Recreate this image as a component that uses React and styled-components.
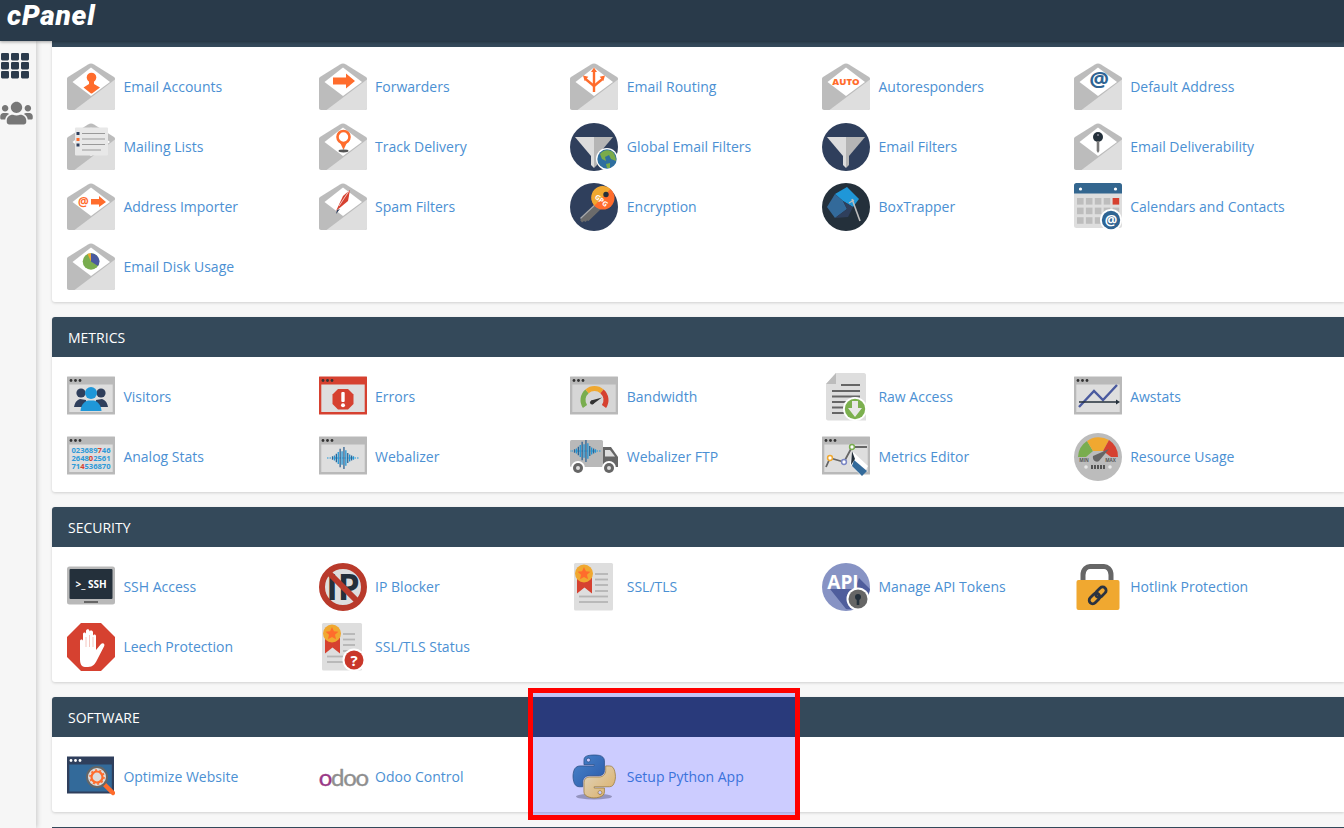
import React from 'react'
import styled, { createGlobalStyle } from 'styled-components'
import { FaUsers } from 'react-icons/fa'

const GlobalStyle = createGlobalStyle`
  html, body {
    margin: 0;
    padding: 0;
    height: 100%;
    overflow: hidden;
    background: #f7f7f7;
    font-family: "Open Sans", "Liberation Sans", sans-serif;
  }
`

const Page = styled.div`
  position: relative;
  width: 1344px;
  height: 828px;
  overflow: hidden;
  display: flex;
  flex-direction: column;
`

const TopBar = styled.header`
  flex: 0 0 41px;
  background: #293a4a;
  box-shadow: 0 1px 3px rgba(0, 0, 0, 0.35);
  position: relative;
  z-index: 2;
  padding-left: 7px;
`

const Logo = styled.div`
  color: #fff;
  font-family: Roboto, "Open Sans", sans-serif;
  font-style: italic;
  font-weight: 900;
  font-size: 28px;
  line-height: 32px;
  letter-spacing: 0.8px;
`

const Layout = styled.div`
  flex: 1;
  display: flex;
  min-height: 0;
`

const Sidebar = styled.aside`
  flex: 0 0 36px;
  background: #f6f6f6;
  box-shadow: 1px 0 5px rgba(0, 0, 0, 0.2);
  display: flex;
  flex-direction: column;
  gap: 21px;
  padding-top: 12px;
  position: relative;
  z-index: 1;
`

const AppsIcon = styled.svg`
  width: 30px;
  height: 26px;
  display: block;
`

const PeopleIcon = styled(FaUsers)`
  width: 33px;
  height: 26px;
  color: #777;
  display: block;
`

const Main = styled.main`
  flex: 1;
  padding-left: 16px;
  min-width: 0;
`

const PeekBar = styled.div`
  height: 6px;
  background: #34495a;
`

const Card = styled.section`
  background: #fff;
  border-radius: ${p => (p.$top ? '0' : '3px')} 0 0 3px;
  box-shadow: 0 1px 3px rgba(0, 0, 0, 0.16);
  margin-bottom: 15px;
  overflow: hidden;
`

const CardHeader = styled.h2`
  margin: 0;
  height: 40px;
  padding-left: 16px;
  background: #34495a;
  color: #fff;
  font-size: 14px;
  font-weight: 400;
  line-height: 41px;
`

const CardBody = styled.div`
  display: grid;
  grid-template-columns: repeat(5, 251.7px);
  grid-auto-rows: 60px;
  padding: 10px 0 5px 15px;
`

const Item = styled.a`
  display: flex;
  align-items: center;
  gap: 8.4px;
  color: #4b90d3;
  font-size: 14px;
  text-decoration: none;
  white-space: nowrap;
`

const Label = styled.span`
  margin-bottom: 2px;
`

const IconBox = styled.svg`
  flex: 0 0 48px;
  width: 48px;
  height: 48px;
  display: block;
`

const PythonBox = styled(IconBox)`
  position: relative;
  z-index: 6;
`

const OdooBox = styled.span`
  flex: 0 0 48px;
  width: 48px;
  font-family: Lato, "Open Sans", sans-serif;
  font-size: 24px;
  line-height: 48px;
  letter-spacing: -1.3px;
  color: #8f8f8f;
  -webkit-text-stroke: 0.4px currentColor;
`

const OdooFirst = styled.span`
  color: #9a3a87;
`

const Highlight = styled.div`
  position: absolute;
  left: 528px;
  top: 688px;
  width: 272px;
  height: 132px;
  box-sizing: border-box;
  border: 5px solid #ff0000;
  background: rgba(0, 0, 255, 0.2);
  z-index: 5;
`

const ORANGE = '#ff6c2c'
const NAVY = '#2f3f5c'
const DARK = '#24303b'
const BLUE = '#2f6493'
const SKY = '#1f97d8'

const IconText = styled.text`
  font-family: "Open Sans", sans-serif;
  font-weight: ${p => p.$weight || 700};
  font-size: ${p => p.$size}px;
  fill: ${p => p.$fill};
`

// shared icon parts

const Envelope = ({ children }) => (
  <IconBox viewBox="0 0 48 48">
    <path d="M24 0.5 C25 0.5 26 1 27 1.6 L47 14 C47.7 14.5 48 15 48 16 V45 C48 46.3 47.2 47 46 47 H2 C0.8 47 0 46.3 0 45 V16 C0 15 0.3 14.5 1 14 L21 1.6 C22 1 23 0.5 24 0.5 Z" fill="#bcbcbc" />
    <path d="M24 4.5 L43 19 L24 33 L5.5 19 Z" fill="#fff" />
    <path d="M48 16.5 V45 C48 46.3 47.2 47 46 47 H7.5 Z" fill="#dedede" />
    {children}
  </IconBox>
)

const Browser = ({ frame = '#b9b9b9', dots = '#333', inner = '#dedede', children }) => (
  <IconBox viewBox="0 0 48 48">
    <rect x="0" y="3.5" width="48" height="38" fill={frame} rx="0.5" />
    <circle cx="4" cy="7.5" r="1.4" fill={dots} />
    <circle cx="8.5" cy="7.5" r="1.4" fill={dots} />
    <circle cx="13" cy="7.5" r="1.4" fill={dots} />
    <rect x="2.3" y="11.5" width="43.4" height="27.5" fill={inner} />
    {children}
  </IconBox>
)

const Funnel = ({ children }) => (
  <IconBox viewBox="0 0 48 48">
    <circle cx="24" cy="24" r="24" fill={NAVY} />
    <path d="M5 14 H24 V33 H21 Z" fill="#dcdcdc" />
    <path d="M43 14 H24 V33 H27 Z" fill="#b5b5b5" />
    <path d="M21 33 H24 V45 L21 42 Z" fill="#dcdcdc" />
    <path d="M24 33 H27 V42 L24 45 Z" fill="#b5b5b5" />
    {children}
  </IconBox>
)

const Wave = ({ x = 24, y = 25, color = SKY, dark = BLUE }) => {
  const bars = [2, 3, 5, 7, 11, 8, 13, 9, 6, 4, 3, 2]
  return (
    <g transform={`translate(${x} ${y})`}>
      <line x1="-16" y1="0" x2="16" y2="0" stroke={color} strokeWidth="1" strokeDasharray="1.5 1" />
      {bars.map((h, i) => (
        <line key={i} x1={(i - 5.5) * 1.9} y1={-h * 0.85} x2={(i - 5.5) * 1.9} y2={h * 0.85} stroke={i % 2 ? color : dark} strokeWidth="1.3" />
      ))}
    </g>
  )
}

const Sheet = ({ x = 4, width = 39 }) => (
  <rect x={x} y="0" width={width} height="47.5" rx="1.5" fill="#dedede" />
)

const Medal = ({ cx = 14, cy = 10.5 }) => (
  <g>
    <path d={`M${cx - 7} ${cy + 4} H${cx + 8} V${cy + 20} L${cx + 0.5} ${cy + 14} L${cx - 7} ${cy + 20} Z`} fill="#d64130" />
    <circle cx={cx} cy={cy} r="9" fill="#f0a830" />
    <path d={`M${cx} ${cy - 6.5} l1.9 4.2 4.5 .5 -3.4 3 1 4.5 -4 -2.3 -4 2.3 1 -4.5 -3.4 -3 4.5 -.5 Z`} fill={ORANGE} />
  </g>
)

// email

const EmailAccounts = () => (
  <Envelope>
    <circle cx="24.5" cy="14.5" r="4.8" fill={ORANGE} />
    <path d="M22 17 H27 V21 L33 24.5 L25 30.5 H24 L16.5 24.5 L22 21 Z" fill={ORANGE} />
  </Envelope>
)

const Forwarders = () => (
  <Envelope>
    <path d="M14 14.5 H27 V10.5 L36 18 L27 25.5 V21.5 H14 Z" fill={ORANGE} />
  </Envelope>
)

const EmailRouting = () => (
  <Envelope>
    <g stroke={ORANGE} strokeWidth="2.4" fill="none">
      <path d="M24 8 V29" />
      <path d="M24 23 L15.5 16" />
      <path d="M24 23 L32.5 16" />
    </g>
    <path d="M24 4.5 L27 9 H21 Z M13 12.5 L18.3 13.8 L14.6 18 Z M35 12.5 L29.7 13.8 L33.4 18 Z" fill={ORANGE} />
  </Envelope>
)

const Autoresponders = () => (
  <Envelope>
    <IconText x="24" y="21.5" textAnchor="middle" $size={9.5} $weight={800} $fill={ORANGE}>AUTO</IconText>
  </Envelope>
)

const DefaultAddress = () => (
  <Envelope>
    <IconText x="25" y="24" textAnchor="middle" $size={22} $fill={BLUE}>@</IconText>
  </Envelope>
)

const MailingLists = () => (
  <Envelope>
    <rect x="8" y="4.5" width="33" height="28" rx="1" fill="#e8e8e8" />
    <rect x="9.5" y="9" width="3" height="3" fill={NAVY} />
    <rect x="9.5" y="15" width="3" height="3" fill={ORANGE} />
    <rect x="9.5" y="20.5" width="3" height="3" fill={NAVY} />
    <g stroke="#9a9a9a" strokeWidth="1.1">
      <line x1="15" y1="10.5" x2="38" y2="10.5" />
      <line x1="15" y1="16" x2="38" y2="16" />
      <line x1="15" y1="21.5" x2="38" y2="21.5" />
      <line x1="15" y1="27" x2="34" y2="27" />
    </g>
  </Envelope>
)

const TrackDelivery = () => (
  <Envelope>
    <circle cx="24.5" cy="14" r="6" fill="#fff" stroke={ORANGE} strokeWidth="2.6" />
    <path d="M21 19.5 H28 L24.5 27 Z" fill={ORANGE} />
    <ellipse cx="24.5" cy="28" rx="5" ry="1.4" fill="#555" />
  </Envelope>
)

const AddressImporter = () => (
  <Envelope>
    <IconText x="16.5" y="23" textAnchor="middle" $size={12} $fill={ORANGE}>@</IconText>
    <path d="M24 16 H32 V13 L39 19 L32 24 V21.5 H24 Z" fill={ORANGE} />
  </Envelope>
)

const SpamFilters = () => (
  <Envelope>
    <path d="M17 28 L24 13 L31 7 L29 18 Z" fill="#d64130" />
    <path d="M20 23 L30 8" stroke="#fff" strokeWidth="0.7" />
    <path d="M18 27 L21 26 L17 31 Z" fill={NAVY} />
  </Envelope>
)

const EmailDeliverability = () => (
  <Envelope>
    <circle cx="24" cy="14" r="5" fill={DARK} />
    <circle cx="24" cy="12" r="1" fill="#889" />
    <path d="M22.7 18 H25.3 V28 L24 30 L22.7 28 Z" fill="#777" />
  </Envelope>
)

const EmailDiskUsage = () => (
  <Envelope>
    <circle cx="24" cy="18.5" r="8.3" fill="#79ad4f" />
    <path d="M24 18.5 V10.2 A8.3 8.3 0 0 1 31 23 Z" fill="#4a5a9f" />
    <path d="M24 18.5 V10.2 A8.3 8.3 0 0 0 20.5 11 Z" fill="#f0a830" />
  </Envelope>
)

const GlobalFilters = () => (
  <Funnel>
    <circle cx="37" cy="36" r="11" fill="#fff" />
    <circle cx="37" cy="36" r="9.7" fill="#2f6f9f" />
    <path d="M30 31 C33 27 38 26 43 29 C45 32 46 35 46 38 L41 36 L39 32 L35 34 L36 38 L32 36 Z M36 41 L40 40 L40 45 L37 45 Z" fill="#7aab4b" />
  </Funnel>
)

const Encryption = () => (
  <IconBox viewBox="0 0 48 48">
    <circle cx="24" cy="24" r="24" fill={NAVY} />
    <path d="M27 21 L10 37 L12 39.5 L14 38 L15.5 39 L17 37.5 L18.5 38 L31 26 Z" fill="#6b6b6b" />
    <path d="M26 20 L10 35 L11 36 L27 21 Z" fill="#aaa" />
    <circle cx="33" cy="15" r="11.5" fill={ORANGE} />
    <path d="M24.5 22.5 A11.5 11.5 0 0 1 40.5 6 Z" fill="#f0a830" />
    <circle cx="36" cy="11.5" r="2.7" fill={DARK} />
    <IconText x="31" y="20" textAnchor="middle" transform="rotate(40 31 18)" $size={7} $fill="#fff">GPG</IconText>
  </IconBox>
)

const BoxTrapper = () => (
  <IconBox viewBox="0 0 48 48">
    <circle cx="24" cy="24" r="24" fill={DARK} />
    <path d="M13 11 L25 4 L37 16 L31 24 L21 18 Z" fill={SKY} />
    <path d="M13 11 L21 18 L25 26 L13 35 L5 24 Z" fill="#336a9a" />
    <path d="M21 18 L31 24 L26 34 L13 35 L25 26 Z" fill={NAVY} />
    <path d="M30 16 L38 38" stroke="#bdbdbd" strokeWidth="1.6" />
    <path d="M27 20 L32 17" stroke="#bdbdbd" strokeWidth="1.2" />
  </IconBox>
)

const Calendars = () => (
  <IconBox viewBox="0 0 48 48">
    <rect x="0" y="0" width="48" height="45" rx="2.5" fill="#dedede" />
    <path d="M0 10.5 V2.5 C0 1 1 0 2.5 0 H45.5 C47 0 48 1 48 2.5 V10.5 Z" fill="#33668f" />
    <circle cx="6.5" cy="6" r="1.6" fill="#fff" />
    <circle cx="41.5" cy="6" r="1.6" fill="#fff" />
    {[0, 1, 2].map(r => [0, 1, 2, 3, 4].map(c => (
      <rect key={`${r}${c}`} x={3 + c * 8.9} y={15 + r * 9.6} width="6.6" height="6.6" fill={r === 0 && c === 4 ? '#d64130' : '#bdbdbd'} />
    )))}
    <circle cx="37" cy="37" r="11" fill="#fff" />
    <circle cx="37" cy="37" r="9.2" fill={BLUE} />
    <IconText x="37" y="42" textAnchor="middle" $size={14} $fill="#fff">@</IconText>
  </IconBox>
)

// metrics

const Visitors = () => (
  <Browser>
    <g fill={NAVY}>
      <circle cx="14" cy="20" r="4.6" />
      <path d="M7 34 C8 29 10 27 13 26 L19 27 L20 34 Z" />
      <circle cx="34" cy="20" r="4.6" />
      <path d="M41 34 C40 29 38 27 35 26 L29 27 L28 34 Z" />
    </g>
    <circle cx="24" cy="20" r="6" fill={SKY} />
    <path d="M13.5 38 C14 32 17 28.5 21 27.5 H27 C31 28.5 34 32 34.5 38 Z" fill={SKY} />
  </Browser>
)

const Errors = () => (
  <Browser frame="#d64130">
    <path d="M19 16 H29 L34.5 21.5 V31 L29 36.5 H19 L13.5 31 V21.5 Z" fill="#d64130" />
    <rect x="22.3" y="19" width="3.4" height="10" rx="1" fill="#fff" />
    <circle cx="24" cy="32.3" r="2" fill="#fff" />
  </Browser>
)

const Bandwidth = () => (
  <Browser inner="#d6d6d6">
    <path d="M15 33.5 A11.5 11.5 0 0 1 17 18.3" stroke="#79ad4f" strokeWidth="5" fill="none" />
    <path d="M17 18.3 A11.5 11.5 0 0 1 32 18.3" stroke="#f0a830" strokeWidth="5" fill="none" />
    <path d="M32 18.3 A11.5 11.5 0 0 1 34 33.5" stroke="#d64130" strokeWidth="5" fill="none" />
    <path d="M21 27.5 L32 24.5 L22.5 31.5 Z" fill="#333" />
    <circle cx="22" cy="29.5" r="2" fill="#333" />
  </Browser>
)

const RawAccess = () => (
  <IconBox viewBox="0 0 48 48">
    <path d="M14 0 H42 C43 0 44 1 44 2 V47.5 H6 C5 47.5 4 46.5 4 45.5 V11 Z" fill="#dedede" />
    <path d="M14 0 V11 H4 Z" fill="#bcbcbc" />
    <g stroke="#666" strokeWidth="2">
      <line x1="19" y1="12" x2="38" y2="12" />
      <line x1="10" y1="18" x2="38" y2="18" />
      <line x1="10" y1="23.5" x2="38" y2="23.5" />
      <line x1="10" y1="29" x2="38" y2="29" />
      <line x1="10" y1="34.5" x2="30" y2="34.5" />
      <line x1="10" y1="40" x2="24" y2="40" />
    </g>
    <circle cx="33" cy="36" r="12" fill="#fff" />
    <circle cx="33" cy="36" r="10.2" fill="#7cb04f" />
    <path d="M30 28 H36 V35 H40 L33 44 L26 35 H30 Z" fill="#e8e8e8" />
  </IconBox>
)

const Awstats = () => (
  <Browser>
    <path d="M5 34 L20 18 L29 27 L43 12" stroke="#4a5a9f" strokeWidth="2.4" fill="none" />
    <path d="M5 29 H43" stroke={DARK} strokeWidth="1.3" />
    <path d="M42 26.5 L46 29 L42 31.5 Z" fill={DARK} />
  </Browser>
)

const AnalogStats = () => {
  const rows = [
    ['023689', '7', '46'],
    ['2648', '0', '2561'],
    ['71', '4', '536870'],
  ]
  return (
    <Browser>
      {rows.map((r, i) => (
        <IconText key={i} x="24" y={20 + i * 8} textAnchor="middle" $size={7.6} $fill="#2f9ad8">
          {r[0]}<tspan fill="#d64130">{r[1]}</tspan>{r[2]}
        </IconText>
      ))}
    </Browser>
  )
}

const Webalizer = () => (
  <Browser>
    <Wave />
  </Browser>
)

const WebalizerFtp = () => (
  <IconBox viewBox="0 0 48 48">
    <rect x="0" y="7" width="33" height="27" rx="1.5" fill="#b9b9b9" />
    <path d="M33 14 H41 L48 24 V34 H33 Z" fill="#666" />
    <path d="M35 17 H40 L45 23.5 H35 Z" fill="#dedede" />
    <Wave x={15} y={18} />
    {[8, 39].map(cx => (
      <g key={cx}>
        <circle cx={cx} cy="35" r="7" fill="#fff" />
        <circle cx={cx} cy="35" r="5" fill="#666" />
        <circle cx={cx} cy="35" r="2" fill="#dedede" />
      </g>
    ))}
  </IconBox>
)

const MetricsEditor = () => (
  <Browser>
    <path d="M4 34 L8 25 L22 29 L30 14 H45" stroke="#666" strokeWidth="1.8" fill="none" />
    <circle cx="8" cy="25" r="2.4" fill="#fff" stroke="#f0a830" strokeWidth="1.5" />
    <circle cx="22" cy="29" r="2.4" fill="#fff" stroke="#7a86c4" strokeWidth="1.5" />
    <circle cx="30" cy="14" r="2.4" fill="#fff" stroke="#79ad4f" strokeWidth="1.5" />
    <path d="M30 18 L46 33 L40 44 L28 31 Z" fill="#fff" />
    <path d="M32 27 L45 38 L40 43 L30 33 Z" fill="#336a9a" />
    <path d="M30 18 L33 26 L29 32 Z" fill={DARK} />
  </Browser>
)

const ResourceUsage = () => (
  <IconBox viewBox="0 0 48 48">
    <circle cx="24" cy="24" r="24" fill="#bcbcbc" />
    <path d="M4 24 A20 20 0 0 1 13 8 L19 18 L12 24 Z" fill="#79ad4f" />
    <path d="M13 8 A20 20 0 0 1 35 7 L29 18 L19 18 Z" fill="#f0a830" />
    <path d="M35 7 A20 20 0 0 1 44 24 L37 24 L29 18 Z" fill="#d64130" />
    <path d="M19 23 L35 16 L25 28 C22 30 18 27 19 23 Z" fill="#666" />
    <IconText x="10" y="28.5" textAnchor="middle" $size={4.6} $fill="#555">MIN</IconText>
    <IconText x="36.5" y="28.5" textAnchor="middle" $size={4.6} $fill="#555">MAX</IconText>
    <circle cx="12" cy="34" r="1.8" fill="#e8e8e8" />
    <circle cx="36" cy="34" r="1.8" fill="#e8e8e8" />
    <g fill="#555">
      {[16, 19, 22, 25, 28].map(x => <rect key={x} x={x + 1} y="32" width="2" height="4" />)}
    </g>
  </IconBox>
)

// security

const SshAccess = () => (
  <IconBox viewBox="0 0 48 48">
    <rect x="0" y="3.5" width="48" height="38" rx="2.5" fill="#b9b9b9" />
    <rect x="2.5" y="6" width="43" height="30" rx="1" fill={DARK} />
    <IconText x="24" y="25" textAnchor="middle" $size={10} $fill="#fff">{'>_ SSH'}</IconText>
    <rect x="17" y="38" width="14" height="2" fill="#666" />
  </IconBox>
)

const IpBlocker = () => (
  <IconBox viewBox="0 0 48 48">
    <circle cx="24" cy="24" r="21" fill="#dedede" stroke="#b93a2b" strokeWidth="6" />
    <IconText x="24" y="37" textAnchor="middle" $size={35} $fill={DARK}>IP</IconText>
    <path d="M9 9 L39 39" stroke="#b93a2b" strokeWidth="6" />
  </IconBox>
)

const SslTls = () => (
  <IconBox viewBox="0 0 48 48">
    <Sheet />
    <Medal />
    <g stroke="#b5b5b5" strokeWidth="1.8">
      <line x1="25" y1="11" x2="38" y2="11" />
      <line x1="25" y1="16.5" x2="38" y2="16.5" />
      <line x1="25" y1="22" x2="38" y2="22" />
      <line x1="25" y1="28" x2="38" y2="28" />
      <line x1="9" y1="33.5" x2="38" y2="33.5" />
      <line x1="9" y1="39" x2="38" y2="39" />
    </g>
  </IconBox>
)

const ApiTokens = () => (
  <IconBox viewBox="0 0 48 48">
    <circle cx="24" cy="24" r="24" fill="#8793c4" />
    <path d="M8 26 L24 46 C35 48 46 38 48 26 L37 15 L33 26 Z" fill="#4f5d9c" />
    <IconText x="21" y="26" textAnchor="middle" $size={19} $fill="#fff">API</IconText>
    <circle cx="36" cy="36" r="11.5" fill="#fff" />
    <circle cx="36" cy="36" r="9.5" fill="#666" />
    <circle cx="36" cy="34" r="3" fill={DARK} />
    <rect x="34.7" y="35" width="2.6" height="7" fill={DARK} />
  </IconBox>
)

const Hotlink = () => (
  <IconBox viewBox="0 0 48 48">
    <path d="M9 20 V12 C9 6 13 3.5 16 3.5 H30 C33 3.5 37 6 37 12 V20" stroke="#666" strokeWidth="5" fill="none" />
    <rect x="2.5" y="17" width="43" height="30" rx="2" fill="#f0a830" />
    <g fill="none" stroke="#2b3340" strokeWidth="2.8" transform="rotate(-45 24 32)">
      <rect x="13" y="28.5" width="12" height="7" rx="3.5" />
      <rect x="22" y="28.5" width="12" height="7" rx="3.5" />
    </g>
  </IconBox>
)

const Leech = () => (
  <IconBox viewBox="0 0 48 48">
    <path d="M14 0 H34 L48 14 V34 L34 48 H14 L0 34 V14 Z" fill="#d64130" />
    <path d="M13 18 C13 16 16 16 16 18 V11 C16 9 19 9 19 11 V8 C19 5.5 22.5 5.5 22.5 8 V9 C22.5 7 26 7 26 9.5 V13 C26 11 29 11 29 13 V27 L34 21 C36 19 38.5 21 37 23.5 L30 37 C28 41 26 44 21 44 H18 C14 44 13 40 13 36 Z" fill="#fff" />
    <g stroke="#f3b8ae" strokeWidth="0.8">
      <line x1="19" y1="14" x2="19" y2="24" />
      <line x1="22.5" y1="12" x2="22.5" y2="24" />
      <line x1="26" y1="14" x2="26" y2="24" />
    </g>
  </IconBox>
)

const SslStatus = () => (
  <IconBox viewBox="0 0 48 48">
    <Sheet x={3} width={40} />
    <Medal cx={13} />
    <g stroke="#b5b5b5" strokeWidth="1.8">
      <line x1="24" y1="11" x2="36" y2="11" />
      <line x1="24" y1="16.5" x2="36" y2="16.5" />
      <line x1="24" y1="22" x2="36" y2="22" />
      <line x1="24" y1="28" x2="32" y2="28" />
      <line x1="8" y1="33.5" x2="24" y2="33.5" />
      <line x1="8" y1="39" x2="24" y2="39" />
    </g>
    <circle cx="35" cy="37" r="11.5" fill="#fff" />
    <circle cx="35" cy="37" r="9.5" fill="#c9372a" />
    <IconText x="35" y="42.5" textAnchor="middle" $size={15} $fill="#fff">?</IconText>
  </IconBox>
)

// software

const Optimize = () => (
  <IconBox viewBox="0 0 48 48">
    <rect x="0" y="3.5" width="47" height="37" fill={NAVY} />
    <circle cx="4" cy="7.5" r="1.4" fill="#fff" />
    <circle cx="8.5" cy="7.5" r="1.4" fill="#fff" />
    <circle cx="13" cy="7.5" r="1.4" fill="#fff" />
    <rect x="2.3" y="11.5" width="42.5" height="27" fill="#336a9a" />
    <path d="M36 30 L46 40" stroke={ORANGE} strokeWidth="4.5" strokeLinecap="round" />
    <circle cx="30" cy="24" r="10" fill="#ddd" stroke="#666" strokeWidth="2" />
    <circle cx="30" cy="24" r="5.5" fill="none" stroke={ORANGE} strokeWidth="2.2" />
    <circle cx="30" cy="24" r="7" fill="none" stroke={ORANGE} strokeWidth="1.6" strokeDasharray="2 2.4" />
  </IconBox>
)

const Python = () => (
  <PythonBox viewBox="0 0 48 48">
    <defs>
      <linearGradient id="pyBlue" x1="0" y1="0" x2="1" y2="1">
        <stop offset="0" stopColor="#4a86cc" />
        <stop offset="1" stopColor="#2a58a8" />
      </linearGradient>
      <linearGradient id="pyGold" x1="0" y1="0" x2="1" y2="1">
        <stop offset="0" stopColor="#e0d6c4" />
        <stop offset="1" stopColor="#dcae62" />
      </linearGradient>
    </defs>
    <ellipse cx="24" cy="43.5" rx="18" ry="3" fill="#7c7ca4" opacity="0.7" />
    <g transform="translate(3 2) scale(0.382)">
      <path fill="url(#pyBlue)" stroke="#2a4f85" strokeWidth="2" d="M54.919 0.001c-4.584.022-8.961.413-12.813 1.095C30.76 3.099 28.7 7.298 28.7 15.032v10.214h26.813v3.405H18.638c-7.793 0-14.616 4.684-16.75 13.594-2.462 10.213-2.571 16.586 0 27.25 1.906 7.938 6.458 13.594 14.25 13.594h9.219v-12.25c0-8.85 7.657-16.656 16.75-16.656h26.781c7.455 0 13.406-6.138 13.406-13.625v-25.532c0-7.266-6.13-12.725-13.406-13.937C64.282.328 59.502-.02 54.918.001zm-14.5 8.219c2.77 0 5.031 2.299 5.031 5.125 0 2.816-2.262 5.094-5.031 5.094-2.78 0-5.031-2.278-5.031-5.094 0-2.826 2.252-5.125 5.031-5.125z" />
      <path fill="url(#pyGold)" stroke="#9a7b3a" strokeWidth="2" d="M85.638 28.657v11.906c0 9.231-7.826 17-16.75 17H42.106c-7.336 0-13.406 6.279-13.406 13.625v25.531c0 7.266 6.319 11.54 13.406 13.625 8.488 2.496 16.627 2.947 26.781 0 6.75-1.954 13.406-5.888 13.406-13.625V86.5H55.512v-3.405H95.7c7.793 0 10.696-5.436 13.406-13.594 2.8-8.399 2.68-16.476 0-27.25-1.926-7.757-5.604-13.594-13.406-13.594zm-15.063 64.656c2.78 0 5.031 2.278 5.031 5.094 0 2.826-2.252 5.125-5.031 5.125-2.77 0-5.031-2.299-5.031-5.125 0-2.816 2.262-5.094 5.031-5.094z" />
    </g>
  </PythonBox>
)

const Odoo = () => (
  <OdooBox><OdooFirst>o</OdooFirst>doo</OdooBox>
)

const sections = [
  {
    rows: [
      ['Email Accounts', EmailAccounts], ['Forwarders', Forwarders], ['Email Routing', EmailRouting], ['Autoresponders', Autoresponders], ['Default Address', DefaultAddress],
      ['Mailing Lists', MailingLists], ['Track Delivery', TrackDelivery], ['Global Email Filters', GlobalFilters], ['Email Filters', Funnel], ['Email Deliverability', EmailDeliverability],
      ['Address Importer', AddressImporter], ['Spam Filters', SpamFilters], ['Encryption', Encryption], ['BoxTrapper', BoxTrapper], ['Calendars and Contacts', Calendars],
      ['Email Disk Usage', EmailDiskUsage],
    ],
  },
  {
    title: 'METRICS',
    rows: [
      ['Visitors', Visitors], ['Errors', Errors], ['Bandwidth', Bandwidth], ['Raw Access', RawAccess], ['Awstats', Awstats],
      ['Analog Stats', AnalogStats], ['Webalizer', Webalizer], ['Webalizer FTP', WebalizerFtp], ['Metrics Editor', MetricsEditor], ['Resource Usage', ResourceUsage],
    ],
  },
  {
    title: 'SECURITY',
    rows: [
      ['SSH Access', SshAccess], ['IP Blocker', IpBlocker], ['SSL/TLS', SslTls], ['Manage API Tokens', ApiTokens], ['Hotlink Protection', Hotlink],
      ['Leech Protection', Leech], ['SSL/TLS Status', SslStatus],
    ],
  },
  {
    title: 'SOFTWARE',
    rows: [
      ['Optimize Website', Optimize], ['Odoo Control', Odoo], ['Setup Python App', Python],
    ],
  },
]

export default function App() {
  return (
    <Page>
      <GlobalStyle />
      <TopBar>
        <Logo>cPanel</Logo>
      </TopBar>
      <Layout>
        <Sidebar>
          <AppsIcon viewBox="0 0 30 26">
            {[0, 1, 2].map(r => [0, 1, 2].map(c => (
              <rect key={`${r}${c}`} x={1 + c * 10} y={r * 9} width="8" height="7.4" rx="1.3" fill="#2b3b4c" />
            )))}
          </AppsIcon>
          <PeopleIcon />
        </Sidebar>
        <Main>
          {sections.map((section, i) => (
            <Card key={i} $top={!section.title}>
              {section.title ? <CardHeader>{section.title}</CardHeader> : <PeekBar />}
              <CardBody>
                {section.rows.map(([label, Icon]) => (
                  <Item key={label} href="#">
                    <Icon />
                    <Label>{label}</Label>
                  </Item>
                ))}
              </CardBody>
            </Card>
          ))}
          <PeekBar />
        </Main>
      </Layout>
      <Highlight />
    </Page>
  )
}
